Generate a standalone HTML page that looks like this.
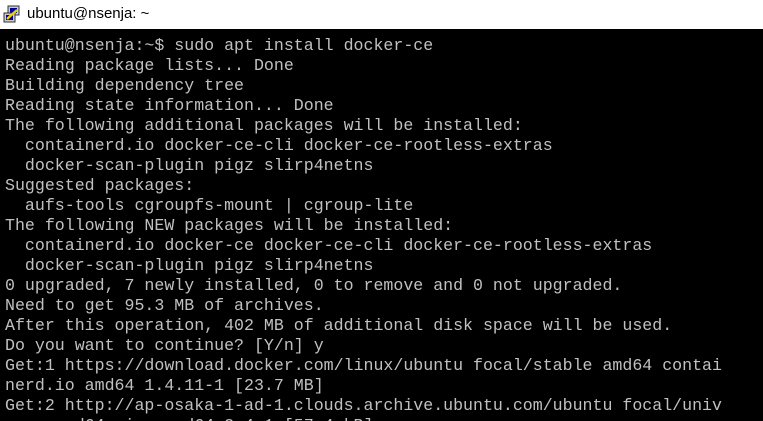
<!DOCTYPE html>
<html><head><style>
html,body{margin:0;padding:0;width:763px;height:421px;overflow:hidden;background:#000;position:relative}
.t{position:absolute;left:0;top:0;width:763px;height:29px;background:#fff;font-family:"Liberation Sans",sans-serif;font-size:15px;color:#000}
.t span{position:absolute;left:27px;top:5px}
.term{position:absolute;left:5px;top:36px;font-family:"Liberation Mono",monospace;font-size:16.6px;line-height:20px;color:#c0c0c0;white-space:pre;margin:0}
</style></head><body>
<div class="t">
<svg style="position:absolute;left:3px;top:5px" width="18" height="18" viewBox="0 0 18 18">
<rect x="5" y="1" width="11" height="9" fill="#ccc" stroke="#333"/><rect x="7" y="3" width="7" height="5" fill="#0000a0"/>
<rect x="1" y="8" width="11" height="9" fill="#ccc" stroke="#333"/><rect x="3" y="10" width="7" height="5" fill="#0000a0"/>
<path d="M4 14 L14 5" stroke="#f0d000" stroke-width="2.5"/></svg>
<span>ubuntu@nsenja: ~</span></div>
<pre class="term">ubuntu@nsenja:~$ sudo apt install docker-ce
Reading package lists... Done
Building dependency tree
Reading state information... Done
The following additional packages will be installed:
  containerd.io docker-ce-cli docker-ce-rootless-extras
  docker-scan-plugin pigz slirp4netns
Suggested packages:
  aufs-tools cgroupfs-mount | cgroup-lite
The following NEW packages will be installed:
  containerd.io docker-ce docker-ce-cli docker-ce-rootless-extras
  docker-scan-plugin pigz slirp4netns
0 upgraded, 7 newly installed, 0 to remove and 0 not upgraded.
Need to get 95.3 MB of archives.
After this operation, 402 MB of additional disk space will be used.
Do you want to continue? [Y/n] y
Get:1 https://download.docker.com/linux/ubuntu focal/stable amd64 contai
nerd.io amd64 1.4.11-1 [23.7 MB]
Get:2 http://ap-osaka-1-ad-1.clouds.archive.ubuntu.com/ubuntu focal/univ
erse amd64 pigz amd64 2.4-1 [57.4 kB]</pre>
</body></html>
